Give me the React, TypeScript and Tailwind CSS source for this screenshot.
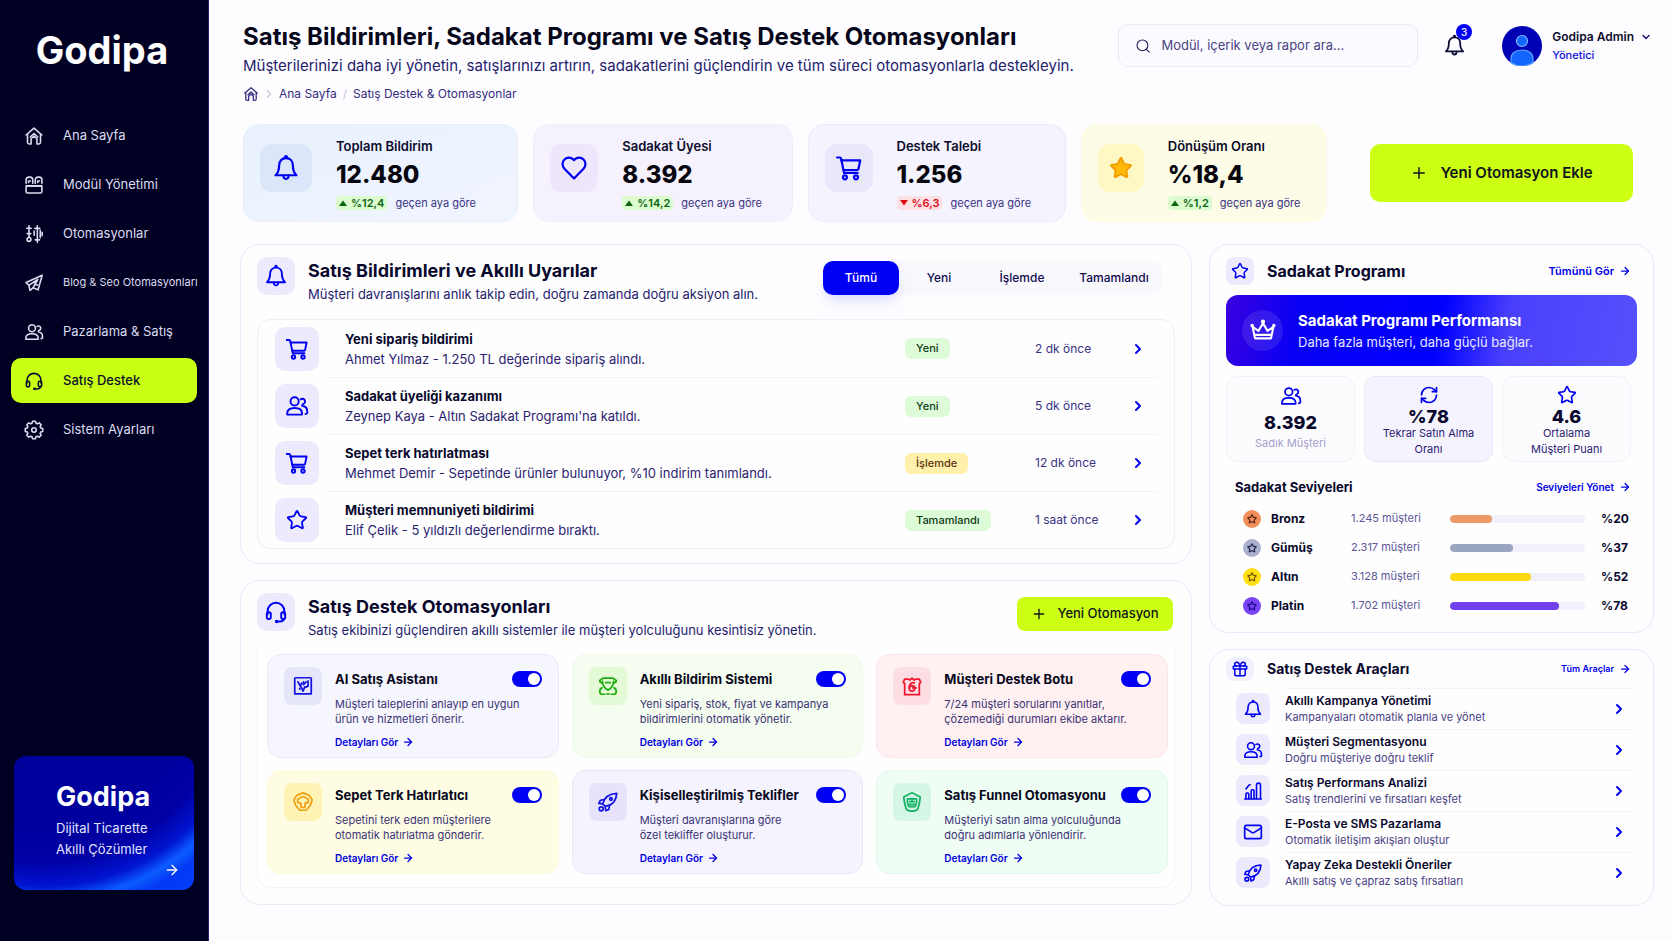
import { useState } from 'react';
import type { ReactNode } from 'react';
import clsx from 'clsx';
import { ArrowRight, ChevronDown, ChevronRight, Gift, Mail, Plus, RefreshCw, Search, Star } from 'lucide-react';

type IconName =
  | 'home'
  | 'modules'
  | 'sliders'
  | 'megaphone'
  | 'users'
  | 'headset'
  | 'gear'
  | 'bell'
  | 'cart'
  | 'heart'
  | 'crown'
  | 'chart'
  | 'rocket'
  | 'assistant'
  | 'notify'
  | 'bot'
  | 'reminder'
  | 'funnel';

// outline of an eight-toothed gear centred on 12,12
function gearPath(): string {
  const points: string[] = [];
  for (let tooth = 0; tooth < 8; tooth++) {
    for (const [offset, radius] of [
      [-17, 8.4],
      [-9, 10.6],
      [9, 10.6],
      [17, 8.4],
    ]) {
      const angle = ((tooth * 45 + offset) * Math.PI) / 180;
      points.push(`${(12 + radius * Math.sin(angle)).toFixed(2)} ${(12 - radius * Math.cos(angle)).toFixed(2)}`);
    }
  }
  return `M${points.join('L')}Z`;
}

const ICONS: Record<IconName, ReactNode> = {
  home: (
    <>
      <path d="M2.5 10.8 12 2.5l9.5 8.3" />
      <path d="M4.2 9.8v9.7c0 1.2.8 2 2 2h2.3v-6.2L12 12l3.5 3.3v6.2h2.3c1.2 0 2-.8 2-2V9.8" />
      <path d="M7.5 13.2 12 9l4.5 4.2" />
    </>
  ),
  modules: (
    <>
      <path d="M2.5 10V5.8a3.3 3.3 0 0 1 3.3-3.3h1.4a3.3 3.3 0 0 1 3.3 3.3V10" />
      <path d="M13.5 10V5.8a3.3 3.3 0 0 1 3.3-3.3h1.4a3.3 3.3 0 0 1 3.3 3.3V10" />
      <path d="M5.5 9V7.2h2M16.5 9V7.2h2" />
      <rect x="2.5" y="13" width="19" height="8.5" rx="1.8" />
      <path d="M2.5 13h19" />
    </>
  ),
  sliders: (
    <>
      <path d="M6 2v13.5M3.3 5h5.4M3.8 11.5h4.4" />
      <circle cx="6" cy="18.5" r="2.3" />
      <path d="M16 2v20M13 5.2h6M13.4 19h5.2M12.2 8.5v5M19.5 7.5v9M21.8 10v4" />
    </>
  ),
  megaphone: (
    <>
      <path d="M21.8 2.8 2.5 11.5l3.4 3.2 1.3 6.1 3.7-3 6 2.4 4.9-17.4Z" />
      <path d="M6 14.5 16.5 7.8l-5.6 9.8M12.5 13.5l3.8 1" />
    </>
  ),
  users: (
    <>
      <circle cx="9.6" cy="7.4" r="4.1" />
      <path d="M2.2 20.6v-1.4c0-3.3 2.6-5.2 7.4-5.2s7.4 1.9 7.4 5.2v1.4Z" />
      <path d="M15.6 5.4a2.7 2.7 0 1 1 2.9 4.5c-.9.3-1.3.9-1.3 1.8 3 .5 5 2.5 5 5.3v2.2l-1.7.8" />
    </>
  ),
  headset: (
    <>
      <path d="M3.6 14.5v-3.3a8.4 8.4 0 0 1 16.8 0v3.3" />
      <rect x="2.8" y="12.3" width="4" height="6.7" rx="1.8" />
      <rect x="17.2" y="12.3" width="4" height="6.7" rx="1.8" />
      <path d="M20.2 18.5c-.4 2-1.9 3-4.2 3h-2.6" />
      <circle cx="12.6" cy="21.4" r=".8" fill="currentColor" />
    </>
  ),
  gear: (
    <>
      <path d={gearPath()} />
      <circle cx="12" cy="12" r="2.7" />
    </>
  ),
  bell: (
    <>
      <path d="M12 3.6c-3.7 0-5.9 2.7-5.9 6.2 0 4.2-.9 6.3-3.1 8.4h18c-2.2-2.1-3.1-4.2-3.1-8.4 0-3.5-2.2-6.2-5.9-6.2Z" />
      <circle cx="12" cy="2.6" r=".8" fill="currentColor" />
      <path d="M9.9 18.5a2.2 2.2 0 1 0 4.2 0" />
    </>
  ),
  cart: (
    <>
      <path d="M1.8 3h2.4c.6 0 .9.3 1 .8l2.6 12.4h11.6" />
      <path d="M5.4 5.5h16.2l-1.5 7.4c-.1.5-.5.8-1 .8H7.2" />
      <circle cx="8.5" cy="20" r="1.7" />
      <circle cx="18" cy="20" r="1.7" />
    </>
  ),
  heart: (
    <path d="M12 21 3.8 12.6a5.6 5.6 0 0 1 0-7.9 5.4 5.4 0 0 1 7.7 0l.5.6.5-.6a5.4 5.4 0 0 1 7.7 0 5.6 5.6 0 0 1 0 7.900Z" />
  ),
  crown: (
    <>
      <path d="M4.600 18.800 2.400 8.200l5.400 3.700L12 4.800l4.200 7.100 5.400-3.700-2.200 10.600Z" />
      <path d="M5 15.600h14" />
      <circle cx="12" cy="3.400" r="1" />
      <circle cx="2" cy="7" r=".7" />
      <circle cx="22" cy="7" r=".7" />
    </>
  ),
  chart: (
    <>
      <path d="M2 21.500h20" />
      <path d="M3.500 21v-5.500c0-.8.500-1.200 1.200-1.200h1c.8 0 1.200.4 1.200 1.200V21" />
      <path d="M9.800 21v-9.300c0-.8.5-1.200 1.200-1.200h1c.8 0 1.200.4 1.200 1.200V21" />
      <path d="M16.200 21V5.200c0-1.700 1-2.700 2.400-2.700s2.400 1 2.400 2.700V21" />
      <path d="M3.500 9.500 7 5l1.500-.5" />
    </>
  ),
  rocket: (
    <>
      <path d="M9 16.800 6.200 14c1.600-6.500 6.300-11 15.300-11.500C21 11.500 16.500 15.700 9 16.800Z" />
      <path d="m8 9.300-4.300.8-1.700 3.400 4.200.5M13.700 15.500l-.8 4.600-3.300 1.400L9 17" />
      <circle cx="15.200" cy="8.700" r="1.400" />
      <circle cx="4.600" cy="19.400" r="2.200" />
    </>
  ),
  assistant: (
    <>
      <path d="M3 3.500 4.500 3h15l1.500.5v17H3Z" />
      <path d="M6.500 7.500 9 12l1.500-3M17.500 6.500v5.700l-2.500 1M10 13l2 4.500 2-4.500M8.500 14.500v1M12.500 7.500v3l3-3" />
    </>
  ),
  notify: (
    <>
      <path d="M5.500 8.500C3.500 8.500 3 7.500 3 6l4-2.700h10L21 6c0 1.500-.5 2.500-2.500 2.500" />
      <path d="M6 7c0 5 2.500 7.500 6 9.500 3.500-2 6-4.500 6-9.500M9.500 8.300h5" />
      <path d="M5.500 14C3.500 14.500 3 16 3 18c0 2 1 3 3 3h2.500M18.500 14c2 .5 2.500 2 2.500 4 0 2-1 3-3 3h-2.500M11 20.500h2" />
    </>
  ),
  bot: (
    <>
      <path d="M4 9.500 2.500 8 4 4.500h4l1.500 1L12 3.500l2.500 2 1.500-1h4L21.500 8 20 9.500v12H4Z" />
      <path d="M14.500 8.500C11 8 9 10.500 9 14" />
      <circle cx="12" cy="14.500" r="3" />
      <path d="M12.500 14h4" />
    </>
  ),
  reminder: (
    <>
      <path d="m12 2 6.500 2.500L22 9.500l-2 6-4.500 5.500h-7L4 15.500l-2-6 3.500-5Z" />
      <path d="M7 13c-2-1.500-1-5 1.500-5C10 5.800 14 5.800 15.500 8c2.500 0 3.500 3.500 1.500 5h-2.500l-.5 5h-4l-.5-5Z" />
    </>
  ),
  funnel: (
    <>
      <path d="m12 2 9 4.500L20 14l-2 6.500-4 1.500h-4l-4-1.500L4 14 3 6.500Z" />
      <path d="M7 8.500h10v4l-1.500 4.500h-7L7 12.500ZM9.500 11.500h5M9.500 14.500h5M12 9v3" />
    </>
  ),
};

function Icon({ name, className }: { name: IconName; className?: string }) {
  return (
    <svg
      viewBox="0 0 24 24"
      fill="none"
      stroke="currentColor"
      strokeWidth={1.9}
      strokeLinecap="round"
      strokeLinejoin="round"
      className={className}
      aria-hidden="true"
    >
      {ICONS[name]}
    </svg>
  );
}

const NAV_ITEMS: { icon: IconName; label: string; active?: boolean; small?: boolean }[] = [
  { icon: 'home', label: 'Ana Sayfa' },
  { icon: 'modules', label: 'Modül Yönetimi' },
  { icon: 'sliders', label: 'Otomasyonlar' },
  { icon: 'megaphone', label: 'Blog & Seo Otomasyonları', small: true },
  { icon: 'users', label: 'Pazarlama & Satış' },
  { icon: 'headset', label: 'Satış Destek', active: true },
  { icon: 'gear', label: 'Sistem Ayarları' },
];

const STATS = [
  {
    label: 'Toplam Bildirim',
    value: '12.480',
    delta: '%12,4',
    up: true,
    icon: <Icon name="bell" className="size-7" />,
    card: 'border-[#e6eefc] bg-linear-to-br from-[#e8f1fe] to-[#f1f5fe]',
    tile: 'w-[52px] bg-[#dbe6fb] text-[#0000f0]',
  },
  {
    label: 'Sadakat Üyesi',
    value: '8.392',
    delta: '%14,2',
    up: true,
    icon: <Icon name="heart" className="size-7" />,
    card: 'border-[#f2ecfb] bg-[#f6f2fd]',
    tile: 'w-12 bg-[#eee7fb] text-[#0000f0]',
  },
  {
    label: 'Destek Talebi',
    value: '1.256',
    delta: '%6,3',
    up: false,
    icon: <Icon name="cart" className="size-7" />,
    card: 'border-[#ebe9fb] bg-[#f4f3fe]',
    tile: 'w-12 bg-[#e8e7fc] text-[#0000f0]',
  },
  {
    label: 'Dönüşüm Oranı',
    value: '%18,4',
    delta: '%1,2',
    up: true,
    icon: <Star className="size-6 fill-[#ffb90a] stroke-[#f0a000]" />,
    card: 'border-[#fcfbe0] bg-[#fdfce6]',
    tile: 'w-[46px] bg-[#fdf8c4]',
  },
];

const TABS = [
  { name: 'Tümü', width: 'w-[76px]' },
  { name: 'Yeni', width: 'w-20' },
  { name: 'İşlemde', width: 'w-[86px]' },
  { name: 'Tamamlandı', width: 'w-[98px]' },
];

const NOTIFICATIONS = [
  {
    icon: <Icon name="cart" className="size-6" />,
    title: 'Yeni sipariş bildirimi',
    text: 'Ahmet Yılmaz - 1.250 TL değerinde sipariş alındı.',
    status: 'Yeni',
    time: '2 dk önce',
  },
  {
    icon: <Icon name="users" className="size-6" />,
    title: 'Sadakat üyeliği kazanımı',
    text: "Zeynep Kaya - Altın Sadakat Programı'na katıldı.",
    status: 'Yeni',
    time: '5 dk önce',
  },
  {
    icon: <Icon name="cart" className="size-6" />,
    title: 'Sepet terk hatırlatması',
    text: 'Mehmet Demir - Sepetinde ürünler bulunuyor, %10 indirim tanımlandı.',
    status: 'İşlemde',
    time: '12 dk önce',
  },
  {
    icon: <Star className="size-[22px]" />,
    title: 'Müşteri memnuniyeti bildirimi',
    text: 'Elif Çelik - 5 yıldızlı değerlendirme bıraktı.',
    status: 'Tamamlandı',
    time: '1 saat önce',
  },
];

const AUTOMATIONS: { icon: IconName; title: string; lines: [string, string]; card: string; tile: string }[] = [
  {
    icon: 'assistant',
    title: 'AI Satış Asistanı',
    lines: ['Müşteri taleplerini anlayıp en uygun', 'ürün ve hizmetleri önerir.'],
    card: 'border-[#e9e8fb] bg-[#f6f6fe]',
    tile: 'bg-[#e6e6fa] text-[#1414e0]',
  },
  {
    icon: 'notify',
    title: 'Akıllı Bildirim Sistemi',
    lines: ['Yeni sipariş, stok, fiyat ve kampanya', 'bildirimlerini otomatik yönetir.'],
    card: 'border-[#f0fbe8] bg-[#f5fdf0]',
    tile: 'bg-[#e4fad6] text-[#1fae12]',
  },
  {
    icon: 'bot',
    title: 'Müşteri Destek Botu',
    lines: ['7/24 müşteri sorularını yanıtlar,', 'çözemediği durumları ekibe aktarır.'],
    card: 'border-[#fde3e7] bg-[#fff0f2]',
    tile: 'bg-[#fddfe3] text-[#f0142c]',
  },
  {
    icon: 'reminder',
    title: 'Sepet Terk Hatırlatıcı',
    lines: ['Sepetini terk eden müşterilere', 'otomatik hatırlatma gönderir.'],
    card: 'border-[#fdfbd8] bg-[#fefde4]',
    tile: 'bg-[#fef3b4] text-[#f0a010]',
  },
  {
    icon: 'rocket',
    title: 'Kişiselleştirilmiş Teklifler',
    lines: ['Müşteri davranışlarına göre', 'özel tekliffer oluşturur.'],
    card: 'border-[#e8e6fb] bg-[#f4f3fe]',
    tile: 'bg-[#e6e3fb] text-[#1414e8]',
  },
  {
    icon: 'funnel',
    title: 'Satış Funnel Otomasyonu',
    lines: ['Müşteriyi satın alma yolculuğunda', 'doğru adımlarla yönlendirir.'],
    card: 'border-[#dff8ea] bg-[#effdf5]',
    tile: 'bg-[#d6f7e5] text-[#12b464]',
  },
];

const LEVELS = [
  { name: 'Bronz', count: '1.245 müşteri', percent: '%20', fill: 31, bar: 'bg-[#ec9a68]', badge: 'bg-[#f08f5c] text-[#5a2410]' },
  { name: 'Gümüş', count: '2.317 müşteri', percent: '%37', fill: 47, bar: 'bg-[#9aa5bf]', badge: 'bg-[#aab0d0] text-[#26264e]' },
  { name: 'Altın', count: '3.128 müşteri', percent: '%52', fill: 60, bar: 'bg-[#fcd910]', badge: 'bg-[#ffe014] text-[#7a5600]' },
  { name: 'Platin', count: '1.702 müşteri', percent: '%78', fill: 81, bar: 'bg-[#7340ee]', badge: 'bg-[#7a44f4] text-[#1c0a8c]' },
];

const TOOLS = [
  { icon: <Icon name="bell" className="size-5" />, title: 'Akıllı Kampanya Yönetimi', text: 'Kampanyaları otomatik planla ve yönet' },
  { icon: <Icon name="users" className="size-5" />, title: 'Müşteri Segmentasyonu', text: 'Doğru müşteriye doğru teklif' },
  { icon: <Icon name="chart" className="size-5" />, title: 'Satış Performans Analizi', text: 'Satış trendlerini ve fırsatları keşfet' },
  { icon: <Mail className="size-5" />, title: 'E-Posta ve SMS Pazarlama', text: 'Otomatik iletişim akışları oluştur' },
  { icon: <Icon name="rocket" className="size-5" />, title: 'Yapay Zeka Destekli Öneriler', text: 'Akıllı satış ve çapraz satış fırsatları' },
];

function Sidebar() {
  return (
    <aside className="flex w-[209px] shrink-0 flex-col border-r border-[#2a1a80] bg-[#000022] text-white">
      <div className="flex h-[113px] items-start justify-center pt-7 pr-1 text-[38px] leading-[44px] font-bold">
        Godipa
      </div>
      <nav className="flex flex-col gap-1 px-[11px]">
        {NAV_ITEMS.map((item) => (
          <a
            key={item.label}
            href="#"
            className={clsx(
              'flex h-[45px] items-center gap-[19px] rounded-[10px] pl-[13px] whitespace-nowrap',
              item.small ? 'text-[11px]' : 'text-[13px]',
              item.active ? 'bg-[#c9ff12] font-medium text-[#0c1030]' : 'text-[#dcdcf0]'
            )}
          >
            <Icon name={item.icon} className="size-5 shrink-0" />
            {item.label}
          </a>
        ))}
      </nav>
      <a
        href="#"
        className="mx-[14px] mt-auto mb-[51px] block overflow-hidden rounded-xl bg-[radial-gradient(circle_at_30px_-80px,#00009c_0px,#00009c_130px,#0000a4_185px,#0014d0_210px,#0c5cff_225px,#0438f4_238px,#0048ff_290px)] pt-[26px] pb-3 pl-[42px]"
      >
        <div className="text-[27px] leading-[30px] font-bold">Godipa</div>
        <p className="mt-[6px] text-[13px] leading-[21px] text-[#e0e4ff]">
          Dijital Ticarette
          <br />
          Akıllı Çözümler
        </p>
        <ArrowRight className="mt-[2px] mr-[14px] ml-auto size-4" />
      </a>
    </aside>
  );
}

function Header() {
  return (
    <header className="flex items-start justify-between pr-5 pl-[34px]">
      <div className="pt-[21px] whitespace-nowrap">
        <h1 className="text-2xl leading-8 font-bold text-[#06061a]">
          Satış Bildirimleri, Sadakat Programı ve Satış Destek Otomasyonları
        </h1>
        <p className="text-[15px] leading-[26px] text-[#241c6c]">
          Müşterilerinizi daha iyi yönetin, satışlarınızı artırın, sadakatlerini güçlendirin ve tüm süreci
          otomasyonlarla destekleyin.
        </p>
        <nav className="mt-[5px] flex items-center text-xs leading-5 text-[#352c80]" aria-label="Konum">
          <a href="#" aria-label="Ana Sayfa">
            <Icon name="home" className="size-4" />
          </a>
          <ChevronRight className="mx-[3px] size-[14px] text-[#c4c4dc]" />
          <a href="#">Ana Sayfa</a>
          <span className="mx-[6px] text-[#c4c4dc]">/</span>
          <span>Satış Destek &amp; Otomasyonlar</span>
        </nav>
      </div>
      <div className="flex items-center pt-6">
        <label className="flex h-[43px] w-[300px] items-center gap-[10px] rounded-[10px] border border-[#e8eaf4] bg-[#fbfbff] px-4">
          <Search className="size-[18px] text-[#241c5c]" strokeWidth={1.6} />
          <input
            type="search"
            aria-label="Ara"
            placeholder="Modül, içerik veya rapor ara..."
            className="w-full bg-transparent text-[13px] text-[#241c6c] outline-none placeholder:text-[#4a4484]"
          />
        </label>
        <button type="button" aria-label="Bildirimler" className="relative ml-[25px] text-[#10103c]">
          <Icon name="bell" className="size-[23px]" />
          <span className="absolute -top-[10px] left-[13px] flex size-4 items-center justify-center rounded-full bg-[#0000f5] text-[10px] font-medium text-white">
            3
          </span>
        </button>
        <button type="button" className="ml-9 flex items-center gap-[10px] text-left">
          <svg viewBox="0 0 40 40" className="size-10" aria-hidden="true">
            <circle cx="20" cy="20" r="20" fill="#0000b4" />
            <circle cx="20" cy="15" r="5.5" fill="#1466ff" stroke="#7db8ff" strokeWidth="1.2" />
            <path
              d="M9 36.7v-4.200c0-5.500 4.700-8.500 11-8.500s11 3 11 8.500v4.200A20 20 0 0 1 9 36.700Z"
              fill="#1466ff"
              stroke="#5ca0ff"
              strokeWidth="1.2"
            />
          </svg>
          <span className="text-xs leading-[18px] font-semibold whitespace-nowrap text-[#0c0c2c]">
            <span className="flex items-center gap-[6px]">
              Godipa Admin
              <ChevronDown className="size-3 text-[#20186c]" strokeWidth={3} />
            </span>
            <span className="block text-[11px] font-medium text-[#1010e0]">Yönetici</span>
          </span>
        </button>
      </div>
    </header>
  );
}

function Stats() {
  return (
    <section className="mt-5 flex items-center pr-[39px] pl-[34px]">
      <div className="grid flex-1 grid-cols-[275fr_259fr_258fr_246fr] gap-[15px]">
        {STATS.map((stat) => (
          <article key={stat.label} className={clsx('flex h-[98px] items-center rounded-2xl border pt-[2px] pl-4', stat.card)}>
            <div className={clsx('mb-3 flex h-12 shrink-0 items-center justify-center rounded-xl', stat.tile)}>
              {stat.icon}
            </div>
            <div className="ml-6 whitespace-nowrap">
              <h2 className="text-[13px] leading-[18px] font-semibold text-[#0c0c2c]">{stat.label}</h2>
              <p className="mt-1 text-2xl leading-8 font-extrabold text-[#06060f]">{stat.value}</p>
              <p className="mt-1 flex items-center gap-2 text-[11px] text-[#3a3284]">
                <span
                  className={clsx(
                    'flex h-[14px] items-center gap-1 rounded px-[3px] font-semibold',
                    stat.up ? 'bg-[#dcfcd0] text-[#0a6410]' : 'bg-[#fde0e4] text-[#e00a14]'
                  )}
                >
                  <svg viewBox="0 0 8 6" className={clsx('h-[6px] w-2', !stat.up && 'rotate-180')} aria-hidden="true">
                    <path d="M4 0.5 8 6H0Z" fill="currentColor" />
                  </svg>
                  {stat.delta}
                </span>
                geçen aya göre
              </p>
            </div>
          </article>
        ))}
      </div>
      <button
        type="button"
        className="ml-[43px] flex h-[58px] w-[263px] items-center justify-center gap-3 rounded-[10px] bg-[#ccff14] text-[15px] font-semibold whitespace-nowrap text-[#10141c]"
      >
        <Plus className="size-[18px]" />
        Yeni Otomasyon Ekle
      </button>
    </section>
  );
}

function PanelHeader({ icon, title, text, children }: { icon: IconName; title: string; text: string; children: ReactNode }) {
  return (
    <div className="flex items-start justify-between">
      <div className="flex gap-[13px]">
        <div className="flex size-[38px] items-center justify-center rounded-[10px] bg-[#eceafc] text-[#0000f0]">
          <Icon name={icon} className="size-6" />
        </div>
        <div className="pt-px whitespace-nowrap">
          <h2 className="text-lg leading-[26px] font-bold text-[#08082c]">{title}</h2>
          <p className="text-[13px] leading-5 text-[#241c6c]">{text}</p>
        </div>
      </div>
      {children}
    </div>
  );
}

function Notifications() {
  const [tab, setTab] = useState('Tümü');

  return (
    <section className="rounded-[20px] border border-[#ebe9f8] bg-[#fefeff] px-4 pt-3 pb-[14px]">
      <PanelHeader
        icon="bell"
        title="Satış Bildirimleri ve Akıllı Uyarılar"
        text="Müşteri davranışlarını anlık takip edin, doğru zamanda doğru aksiyon alın."
      >
        <div role="tablist" className="mt-1 mr-3 flex h-[34px] rounded-[10px] bg-[#f8f8fd] text-xs font-medium">
          {TABS.map(({ name, width }) => (
            <button
              key={name}
              type="button"
              role="tab"
              aria-selected={tab === name}
              onClick={() => setTab(name)}
              className={clsx(
                'rounded-[10px]',
                width,
                tab === name ? 'bg-[#0000f5] text-white shadow-lg shadow-[#0000f5]/10' : 'text-[#140c50]'
              )}
            >
              {name}
            </button>
          ))}
        </div>
      </PanelHeader>
      <ul className="mt-[15px] rounded-[14px] border border-[#efeef8]">
        {NOTIFICATIONS.map((item, index) => (
          <li key={item.title} className="flex pr-4 pl-[17px]">
            <div className="flex items-center">
              <div className="flex size-11 items-center justify-center rounded-[10px] bg-[#eceafc] text-[#0000f0]">
                {item.icon}
              </div>
            </div>
            <a
              href="#"
              className={clsx(
                'ml-2 grid h-[57px] flex-1 grid-cols-[1fr_106px_106px_41px] items-center pl-[18px]',
                index > 0 && 'border-t border-[#f2f1f9]'
              )}
            >
              <div className="whitespace-nowrap">
                <h3 className="text-[13px] leading-5 font-bold text-[#08082c]">{item.title}</h3>
                <p className="text-[13px] leading-5 text-[#2a2270]">{item.text}</p>
              </div>
              <span
                className={clsx(
                  'flex h-[21px] w-fit items-center rounded-[6px] px-[11px] text-[11px] font-medium',
                  item.status === 'İşlemde' ? 'bg-[#fff0ac] text-[#5c3410]' : 'bg-[#defbd8] text-[#0a3c14]'
                )}
              >
                {item.status}
              </span>
              <span className="pl-6 text-xs whitespace-nowrap text-[#3a3284]">{item.time}</span>
              <ChevronRight className="mx-auto size-4 text-[#0000f0]" strokeWidth={3} />
            </a>
          </li>
        ))}
      </ul>
    </section>
  );
}

function AutomationCard({ icon, title, lines, card, tile }: (typeof AUTOMATIONS)[number]) {
  const [enabled, setEnabled] = useState(true);

  return (
    <article className={clsx('flex h-[104px] gap-[13px] rounded-[14px] border px-4 pt-3', card)}>
      <div className={clsx('flex size-[38px] shrink-0 items-center justify-center rounded-lg', tile)}>
        <Icon name={icon} className="size-[22px]" />
      </div>
      <div className="flex-1 whitespace-nowrap">
        <div className="flex h-6 items-center justify-between">
          <h3 className="text-[13px] leading-6 font-bold text-[#08081c]">{title}</h3>
          <input
            type="checkbox"
            role="switch"
            aria-label={title}
            checked={enabled}
            onChange={() => setEnabled(!enabled)}
            className="flex h-4 w-[30px] cursor-pointer appearance-none items-center rounded-full bg-[#b8b8d8] px-[2px] before:size-3 before:rounded-full before:bg-white before:content-[''] checked:justify-end checked:bg-[#0000f5]"
          />
        </div>
        <p className="mt-[6px] text-[11px] leading-[15px] text-[#3a3274]">
          {lines[0]}
          <br />
          {lines[1]}
        </p>
        <a href="#" className="mt-[7px] flex items-center gap-1 text-[10px] leading-4 font-semibold text-[#0000e0]">
          Detayları Gör
          <ArrowRight className="size-3" strokeWidth={2.5} />
        </a>
      </div>
    </article>
  );
}

function Automations() {
  return (
    <section className="rounded-[20px] border border-[#ebe9f8] bg-[#fefeff] px-4 pt-3 pb-4">
      <PanelHeader
        icon="headset"
        title="Satış Destek Otomasyonları"
        text="Satış ekibinizi güçlendiren akıllı sistemler ile müşteri yolculuğunu kesintisiz yönetin."
      >
        <button
          type="button"
          className="mt-1 mr-[2px] flex h-[34px] w-[156px] items-center justify-center gap-[10px] rounded-lg bg-[#ccff14] text-[13px] font-medium whitespace-nowrap text-[#10141c]"
        >
          <Plus className="size-4" />
          Yeni Otomasyon
        </button>
      </PanelHeader>
      <div className="mt-[7px] grid grid-cols-3 gap-x-[13px] gap-y-3 rounded-b-[14px] border border-t-0 border-[#f3f2fa] pt-[7px] pr-[6px] pb-[13px] pl-[9px]">
        {AUTOMATIONS.map((item) => (
          <AutomationCard key={item.title} {...item} />
        ))}
      </div>
    </section>
  );
}

function MoreLink({ children, className }: { children: ReactNode; className?: string }) {
  return (
    <a href="#" className={clsx('flex items-center gap-[5px] font-semibold whitespace-nowrap text-[#0000e8]', className)}>
      {children}
      <ArrowRight className="size-3" strokeWidth={2.5} />
    </a>
  );
}

function LoyaltyPanel() {
  return (
    <section className="rounded-[20px] border border-[#e9e7fa] bg-[#fefeff] px-4 pt-3 pb-3">
      <div className="flex items-center">
        <div className="flex size-7 items-center justify-center rounded-lg bg-[#eceafc] text-[#0000f0]">
          <Star className="size-[18px]" />
        </div>
        <h2 className="ml-[13px] flex-1 text-base leading-7 font-bold text-[#08082c]">Sadakat Programı</h2>
        <MoreLink className="mr-[6px] text-[11px]">Tümünü Gör</MoreLink>
      </div>

      <div className="mt-[10px] flex h-[71px] items-center gap-[15px] rounded-xl bg-[linear-gradient(100deg,#3a00e0_0%,#0800f4_18%,#0000ff_52%,#4a40fc_68%,#5650fc_100%)] pl-4 text-white">
        <div className="flex size-[41px] items-center justify-center rounded-full bg-white/10">
          <Icon name="crown" className="size-[26px]" />
        </div>
        <div className="whitespace-nowrap">
          <h3 className="text-[15px] leading-[22px] font-bold">Sadakat Programı Performansı</h3>
          <p className="text-[13px] leading-5 text-[#e8e8ff]">Daha fazla müşteri, daha güçlü bağlar.</p>
        </div>
      </div>

      <div className="mt-[10px] mr-[6px] grid grid-cols-3 gap-[9px] text-center text-[11px] leading-4 text-[#2a2270]">
        <div className="flex h-[86px] flex-col items-center rounded-xl border border-[#f1f1f9] bg-[#fcfcff] pt-2">
          <Icon name="users" className="size-[22px] text-[#0000f0]" />
          <strong className="mt-1 text-lg leading-6 font-extrabold text-[#08082c]">8.392</strong>
          <span className="text-[#a4a0c8]">Sadık Müşteri</span>
        </div>
        <div className="flex h-[86px] flex-col items-center rounded-xl border border-[#e9e7fb] bg-[#f4f3fe] pt-2">
          <RefreshCw className="size-5 text-[#0000f0]" />
          <strong className="mt-1 text-lg leading-4 font-extrabold text-[#08082c]">%78</strong>
          <span>
            Tekrar Satın Alma
            <br />
            Oranı
          </span>
        </div>
        <div className="flex h-[86px] flex-col items-center rounded-xl border border-[#f1f1f9] bg-[#fcfcff] pt-2">
          <Star className="size-5 text-[#0000f0]" />
          <strong className="mt-1 text-lg leading-4 font-extrabold text-[#08082c]">4.6</strong>
          <span>
            Ortalama
            <br />
            Müşteri Puanı
          </span>
        </div>
      </div>

      <div className="mt-[15px] mr-[6px] ml-[9px] flex items-center justify-between">
        <h3 className="text-[13px] leading-5 font-bold text-[#08082c]">Sadakat Seviyeleri</h3>
        <MoreLink className="text-[10px]">Seviyeleri Yönet</MoreLink>
      </div>
      <table className="mt-[7px] w-full whitespace-nowrap">
        <tbody>
          {LEVELS.map((level) => (
            <tr key={level.name} className="h-[29px]">
              <td className="w-[45px] pl-[17px]">
                <span className={clsx('flex size-[18px] items-center justify-center rounded-full', level.badge)}>
                  <Star className="size-[10px]" strokeWidth={3} />
                </span>
              </td>
              <th scope="row" className="w-20 text-left text-xs font-bold text-[#08082c]">
                {level.name}
              </th>
              <td className="w-[99px] text-[11px] text-[#5c5698]">{level.count}</td>
              <td>
                <div className="h-2 overflow-hidden rounded-full bg-[#f1f0fb]">
                  <div className={clsx('h-full rounded-full', level.bar)} style={{ width: `${level.fill}%` }} />
                </div>
              </td>
              <td className="w-[52px] pl-4 text-xs font-bold text-[#08082c]">{level.percent}</td>
            </tr>
          ))}
        </tbody>
      </table>
    </section>
  );
}

function ToolsPanel() {
  return (
    <section className="rounded-[20px] border border-[#e9e7fa] bg-[#fefeff] px-4 pt-[7px] pb-3">
      <div className="flex items-center">
        <div className="flex h-6 w-7 items-center justify-center rounded-lg bg-[#f1f0fd] text-[#0000f0]">
          <Gift className="size-[18px]" />
        </div>
        <h2 className="ml-[13px] flex-1 text-sm leading-6 font-bold text-[#08082c]">Satış Destek Araçları</h2>
        <MoreLink className="mr-[6px] text-[9px]">Tüm Araçlar</MoreLink>
      </div>
      <ul className="mt-[7px] pr-[6px] pl-[10px]">
        {TOOLS.map((tool) => (
          <li key={tool.title} className="flex items-center">
            <div className="flex h-[31px] w-[34px] items-center justify-center rounded-lg bg-[#eceafc] text-[#0000f0]">
              {tool.icon}
            </div>
            <a href="#" className="ml-[15px] flex h-[41px] flex-1 items-center justify-between border-t border-[#f3f2fa] pr-1">
              <div className="whitespace-nowrap">
                <h3 className="text-xs leading-4 font-semibold text-[#08082c]">{tool.title}</h3>
                <p className="text-[11px] leading-4 text-[#4a4284]">{tool.text}</p>
              </div>
              <ChevronRight className="size-4 text-[#0000f0]" strokeWidth={3} />
            </a>
          </li>
        ))}
      </ul>
    </section>
  );
}

export default function App() {
  return (
    <div className="flex min-h-screen bg-[#fdfdff] font-['Inter','Noto_Sans',sans-serif]">
      <Sidebar />
      <main className="min-w-0 flex-1">
        <Header />
        <Stats />
        <div className="mt-[22px] grid grid-cols-[952fr_445fr] items-start gap-[17px] pr-[18px] pb-8 pl-[31px]">
          <div className="flex flex-col gap-4">
            <Notifications />
            <Automations />
          </div>
          <div className="flex flex-col gap-4">
            <LoyaltyPanel />
            <ToolsPanel />
          </div>
        </div>
      </main>
    </div>
  );
}
